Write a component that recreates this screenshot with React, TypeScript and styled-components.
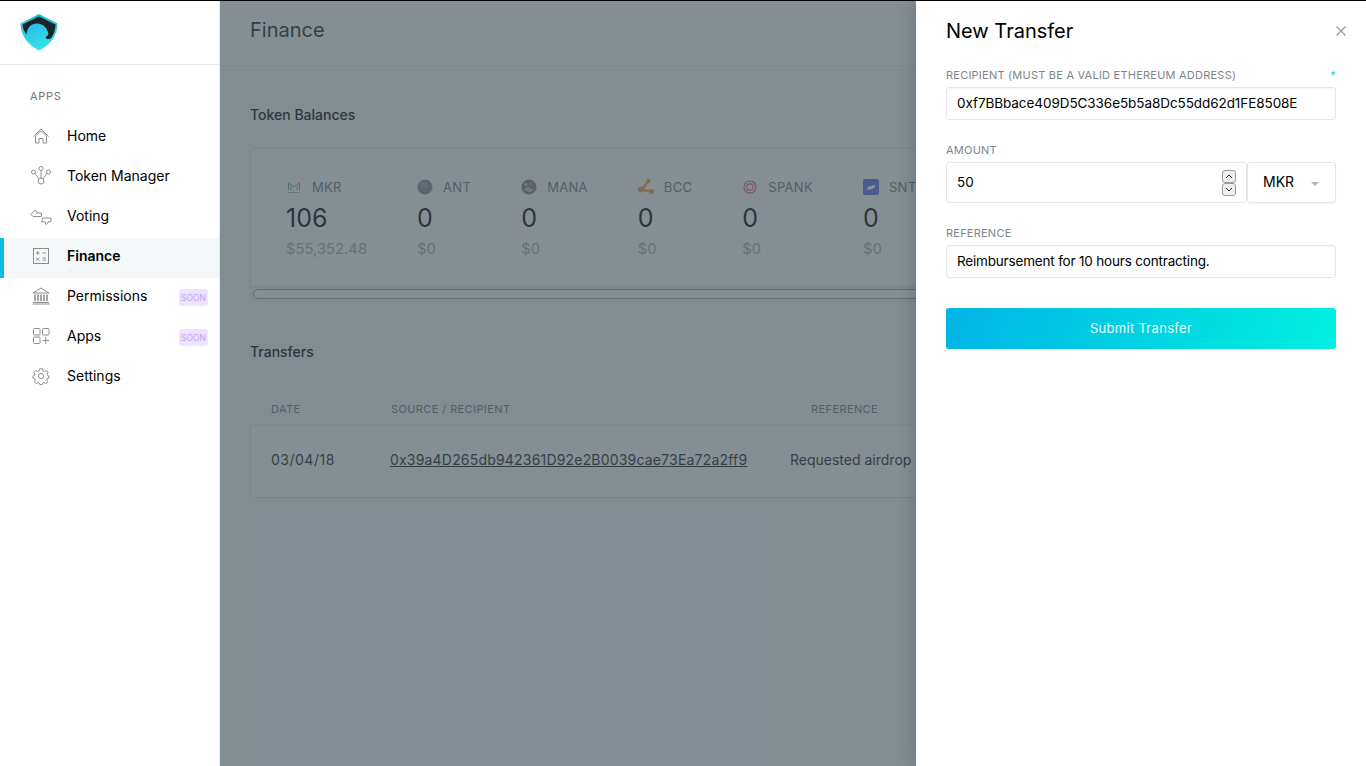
import { ReactNode } from 'react';
import styled, { createGlobalStyle } from 'styled-components';

const FONT = `'Inter', 'Liberation Sans', sans-serif`;

const GlobalStyle = createGlobalStyle`
  html, body {
    margin: 0;
    padding: 0;
    height: 100%;
    overflow: hidden;
    background: #fff;
    font-family: ${FONT};
  }
  * { box-sizing: border-box; }
`;

const Page = styled.div`
  position: relative;
  display: flex;
  width: 1366px;
  height: 766px;
  overflow: hidden;
  border-top: 1px solid #000;
`;

/* sidebar */
const Sidebar = styled.aside`
  flex: 0 0 220px;
  display: flex;
  flex-direction: column;
  background: #fff;
  border-right: 1px solid #e8e8e8;
`;

const LogoBar = styled.div`
  height: 64px;
  display: flex;
  align-items: center;
  padding-left: 20px;
  border-bottom: 1px solid #e8e8e8;
`;

const SideLabel = styled.div`
  margin: 24px 0 15px 30px;
  font-size: 11px;
  line-height: 14px;
  letter-spacing: 0.7px;
  color: #6d777b;
`;

const NavList = styled.nav`
  display: flex;
  flex-direction: column;
`;

const NavItem = styled.div<{ $active?: boolean }>`
  display: flex;
  align-items: center;
  height: 40px;
  padding: 0 11px 5px ${(p) => (p.$active ? 26 : 30)}px;
  border-left: ${(p) => (p.$active ? '4px solid #08bee5' : 'none')};
  background: ${(p) => (p.$active ? '#f4f8f9' : 'transparent')};
  color: #000;
  font-size: 14px;
  font-weight: ${(p) => (p.$active ? 600 : 400)};
`;

const NavIcon = styled.span`
  flex: 0 0 22px;
  height: 22px;
  margin-right: 15px;
  display: flex;
  align-items: center;
  justify-content: center;
`;

const Soon = styled.span`
  margin: 4px 0 0 auto;
  width: 29px;
  height: 17px;
  display: flex;
  align-items: center;
  justify-content: center;
  border-radius: 3px;
  background: #ece3ff;
  color: #bfa3f2;
  font-size: 8.5px;
`;

/* finance page behind the overlay */
const Main = styled.main`
  position: relative;
  flex: 1;
  min-width: 0;
  display: flex;
  flex-direction: column;
  background: #f7fbfd;
`;

const MainHeader = styled.header`
  height: 65px;
  flex: none;
  display: flex;
  align-items: center;
  padding: 0 30px 6px;
  background: #fff;
  border-bottom: 1px solid #e8e8e8;
  font-size: 20px;
  color: #15202a;
`;

const MainBody = styled.div`
  padding: 40px 30px 0;
  display: flex;
  flex-direction: column;
`;

const SectionTitle = styled.h2`
  margin: 0;
  font-size: 14px;
  line-height: 18px;
  font-weight: 500;
  color: #000;
`;

const BalancesCard = styled.div`
  margin-top: 24px;
  height: 154px;
  display: flex;
  flex-direction: column;
  background: #fff;
  border: 1px solid #e6e6e6;
  border-radius: 3px;
`;

const TokenRow = styled.div`
  flex: 1;
  display: flex;
  gap: 50px;
  padding: 29px 0 0 35px;
  overflow: hidden;
`;

const Token = styled.div`
  flex: none;
  display: flex;
  flex-direction: column;
`;

const TokenHead = styled.div`
  display: flex;
  align-items: center;
  height: 18px;
  font-size: 13px;
  letter-spacing: 0.3px;
  color: #6d777b;
`;

const TokenIcon = styled.span`
  flex: 0 0 16px;
  height: 16px;
  margin-right: 10px;
  display: flex;
`;

const TokenAmount = styled.div`
  margin-top: 7px;
  font-size: 25px;
  line-height: 30px;
  color: #000;
`;

const TokenValue = styled.div`
  margin-top: 6px;
  font-size: 14.8px;
  line-height: 20px;
  color: #a5abb0;
`;

const Scrollbar = styled.div`
  flex: none;
  height: 15px;
  padding: 2px;
  background: #f1f3f4;
  border-top: 1px solid #dfe2e4;
`;

const ScrollThumb = styled.div`
  height: 10px;
  width: 1000px;
  background: #fdfdfd;
  border: 1px solid #9aa0a5;
  border-radius: 5px;
`;

const TransfersTitle = styled(SectionTitle)`
  margin-top: 41px;
`;

const TableHead = styled.div`
  margin-top: 41px;
  display: grid;
  grid-template-columns: 141px 399px 1fr;
  font-size: 11px;
  line-height: 14px;
  color: #6d777b;
  letter-spacing: 0.4px;
`;

const HeadCell = styled.div`
  padding-left: 21px;
  &:nth-child(2) { padding-left: 0; }
`;

const TableRow = styled.div`
  margin-top: 9px;
  height: 73px;
  padding-bottom: 4px;
  display: grid;
  grid-template-columns: 139px 400px 1fr;
  align-items: center;
  background: #fff;
  border: 1px solid #e6e6e6;
  border-radius: 3px;
  font-size: 14px;
  color: #15202a;
  white-space: nowrap;
`;

const DateCell = styled.div`
  padding-left: 20px;
  letter-spacing: 0.5px;
`;

const AddressLink = styled.a`
  color: inherit;
  text-decoration: underline;
  letter-spacing: 0.19px;
`;

const Overlay = styled.div`
  position: absolute;
  inset: 0;
  background: rgba(68, 81, 89, 0.65);
`;

/* transfer panel */
const Panel = styled.section`
  position: absolute;
  top: 0;
  right: 0;
  bottom: 0;
  width: 450px;
  padding: 0 30px;
  display: flex;
  flex-direction: column;
  background: #fff;
  box-shadow: -2px 0 18px rgba(0, 0, 0, 0.18);
`;

const PanelHeader = styled.header`
  height: 60px;
  padding-bottom: 1px;
  display: flex;
  align-items: center;
  justify-content: space-between;
`;

const PanelTitle = styled.h1`
  margin: 0;
  font-size: 20px;
  font-weight: 400;
  color: #000;
`;

const CloseButton = styled.button`
  margin-right: -10px;
  padding: 0;
  width: 10px;
  height: 10px;
  border: 0;
  background: none;
  display: flex;
`;

const Field = styled.div`
  display: flex;
  flex-direction: column;
  margin-bottom: 16px;
`;

const LabelRow = styled.label`
  display: flex;
  justify-content: space-between;
  height: 26px;
  padding-top: 7px;
  font-size: 11px;
  line-height: 14px;
  letter-spacing: 0.23px;
  color: #7d858a;
`;

const Required = styled.span`
  color: #08d8e5;
`;

const TextInput = styled.input<{ $spacing: number }>`
  width: 100%;
  height: 33px;
  padding: 0 10px 2px;
  border: 1px solid #e6e6e6;
  border-radius: 3px;
  outline: 0;
  background: #fff;
  box-shadow: inset 0 1px 2px rgba(0, 0, 0, 0.04);
  font: 400 13.5px ${FONT};
  letter-spacing: ${(p) => p.$spacing}px;
  color: #000;
`;

const AmountRow = styled.div`
  display: flex;
  height: 41px;
`;

const AmountBox = styled.div`
  flex: 1;
  display: flex;
  align-items: center;
  padding: 0 10px;
  border: 1px solid #e6e6e6;
  border-radius: 3px;
`;

const AmountInput = styled.input`
  flex: 1;
  min-width: 0;
  padding: 0 0 2px;
  border: 0;
  outline: 0;
  font: 400 13.5px ${FONT};
  color: #000;
`;

const Stepper = styled.div`
  flex: none;
  display: flex;
  flex-direction: column;
`;

const StepButton = styled.span`
  width: 14px;
  height: 13px;
  display: flex;
  align-items: center;
  justify-content: center;
  background: #efefef;
  border: 1px solid #9b9b9b;
  border-radius: 3px;
`;

const SelectBox = styled.div`
  flex: 0 0 89px;
  display: flex;
  align-items: center;
  justify-content: space-between;
  padding: 0 16px 2px 15px;
  border: 1px solid #e6e6e6;
  border-radius: 3px;
  box-shadow: 0 1px 2px rgba(0, 0, 0, 0.05);
  font-size: 14px;
  color: #000;
`;

const Caret = styled.span`
  width: 0;
  height: 0;
  margin-top: 4px;
  border-left: 4px solid transparent;
  border-right: 4px solid transparent;
  border-top: 4px solid #b3b3b3;
`;

const SubmitButton = styled.button`
  margin-top: 14px;
  height: 41px;
  padding: 0 0 2px;
  border: 0;
  border-radius: 3px;
  background: linear-gradient(110deg, #00b4e6, #00f0e0);
  color: #e4fbfb;
  font: 400 13px ${FONT};
  letter-spacing: 0.3px;
`;

/* drawings */
const Svg = ({ children, size = 22 }: { children: ReactNode; size?: number }) => (
  <svg width={size} height={size} viewBox="0 0 22 22" fill="none" stroke="#8e8e8e" strokeWidth="1">
    {children}
  </svg>
);

const Logo = () => (
  <svg width="38" height="37" viewBox="0 0 38 37">
    <defs>
      <linearGradient id="shieldEdge" x1="0" y1="0" x2="0" y2="1">
        <stop offset="0" stopColor="#1fb6d8" />
        <stop offset="1" stopColor="#34e6ea" />
      </linearGradient>
      <linearGradient id="shieldFill" x1="0.2" y1="0" x2="0.7" y2="1">
        <stop offset="0" stopColor="#2bb4ea" />
        <stop offset="1" stopColor="#2fe4e4" />
      </linearGradient>
    </defs>
    <path d="M19 0 L37.5 9.5 C37.5 22 30 31 19 36.5 C8 31 0.5 22 0.5 9.5 Z" fill="url(#shieldEdge)" />
    <path d="M19 2.5 L35.5 10.5 C35 22 28.5 29.5 19 34.5 C9.5 29.5 3 22 2.5 10.5 Z" fill="url(#shieldFill)" />
    <path
      d="M19 2.5 L35.5 10.5 C35.3 15 34 20 31.5 23.5 C29.5 25.5 26.5 25.5 25.5 23.5 C26 21.5 28 22 28.5 20.5 C28 15 23.5 9.5 17 9.5 C11 9.5 7 14 6.5 20.5 C4 17 2.8 14 2.5 10.5 Z"
      fill="#1d2226"
    />
  </svg>
);

const HomeIcon = () => (
  <Svg>
    <path d="M3.5 11.5 L11 4 L18.5 11.5 M5.5 11 L11 5.8 L16.5 11 M5.5 11 V18 H9 V13.5 H13 V18 H16.5 V11" />
  </Svg>
);
const TokenManagerIcon = () => (
  <Svg>
    <circle cx="11" cy="3.5" r="2" />
    <circle cx="3.5" cy="7" r="2" />
    <circle cx="18.5" cy="7" r="2" />
    <circle cx="11" cy="16" r="3" />
    <path d="M11 5.5 V13 M5 8.5 L9 13.8 M17 8.5 L13 13.8" />
  </Svg>
);
const VotingIcon = () => (
  <Svg>
    <path d="M1 9.5 L5 5 L6.5 6.2 L6 8 H11.5 V11.5 L3 11.5 Z" />
    <path d="M21 13 V16.5 L18 17 L16.5 19.5 L15.5 19 L15.5 17 L11.5 16.5 L12.5 13 Z" />
  </Svg>
);
const FinanceIcon = () => (
  <Svg>
    <rect x="3.5" y="3.5" width="15" height="15" />
    <path d="M6 8 H9.5 M7.8 6.2 V9.8 M12.5 8 H16 M6.2 12.5 L9.2 15.5 M9.2 12.5 L6.2 15.5 M12.5 13 H16 M12.5 15 H16" />
  </Svg>
);
const PermissionsIcon = () => (
  <Svg>
    <path d="M3 8 L11 3 L19 8 Z" />
    <path d="M5 9.5 V16 M8 9.5 V16 M11 9.5 V16 M14 9.5 V16 M17 9.5 V16" strokeWidth="1.6" />
    <path d="M3 17.5 H19 M2.5 19 H19.5" />
  </Svg>
);
const AppsIcon = () => (
  <Svg>
    <rect x="3.5" y="3.5" width="6.5" height="6.5" rx="1" />
    <rect x="12.5" y="3.5" width="6.5" height="6.5" rx="1" />
    <rect x="3.5" y="12" width="6.5" height="6.5" rx="1" />
    <path d="M12.5 15.5 H19 M15.7 12.2 V18.8" />
  </Svg>
);
const SettingsIcon = () => (
  <Svg>
    <circle cx="11" cy="11" r="2.6" />
    <path d="M9.6 3.8 H12.4 L12.9 5.9 L14.4 6.5 L16.2 5.4 L18.1 7.3 L17 9.1 L17.6 10.6 L19 11 V13 L17.3 13.5 L16.7 15 L17.7 16.8 L15.8 18.6 L14 17.6 L12.6 18.1 L12.2 19.5 H9.8 L9.4 18.1 L8 17.6 L6.2 18.6 L4.3 16.8 L5.3 15 L4.7 13.5 L3 13 V11 L4.4 10.6 L5 9.1 L3.9 7.3 L5.8 5.4 L7.6 6.5 L9.1 5.9 Z" />
  </Svg>
);

const MkrIcon = () => (
  <svg width="16" height="16" viewBox="0 0 16 16" fill="none" stroke="#5fa8a3" strokeWidth="1">
    <path d="M2.5 11 V4 L8 8 L13.5 4 V11 M5 11 V7.5 M11 11 V7.5" />
    <path d="M2.5 13.5 H13.5" strokeDasharray="1.5 0.6" />
  </svg>
);
const AntIcon = () => (
  <svg width="16" height="16" viewBox="0 0 16 16">
    <circle cx="8" cy="8" r="7.5" fill="#7d8a98" />
    <circle cx="7" cy="6.5" r="4" fill="#a4b0bc" opacity="0.5" />
  </svg>
);
const ManaIcon = () => (
  <svg width="16" height="16" viewBox="0 0 16 16">
    <circle cx="8" cy="8" r="7.5" fill="#7c7f82" />
    <circle cx="10" cy="5" r="2" fill="#e2853c" />
    <circle cx="5" cy="5.5" r="1.5" fill="#d8d8d8" />
    <path d="M3 10 L7 8 L13 11 L8 13.5 Z" fill="#c4c6c8" />
  </svg>
);
const BccIcon = () => (
  <svg width="16" height="16" viewBox="0 0 16 16" fill="#f79f3f">
    <circle cx="3" cy="10.5" r="3" />
    <circle cx="13.5" cy="12.5" r="2.5" />
    <circle cx="10.5" cy="2" r="2" />
    <path d="M3 9.5 L9.5 1.5 L11 2.5 L6 10 L13.5 11.5 L13 13.5 L3 12 Z" />
  </svg>
);
const SpankIcon = () => (
  <svg width="16" height="16" viewBox="0 0 16 16" fill="none" stroke="#f1528b" strokeWidth="1.2">
    <circle cx="8" cy="8" r="6" />
    <circle cx="8" cy="8" r="3.2" />
  </svg>
);
const SntIcon = () => (
  <svg width="16" height="16" viewBox="0 0 16 16">
    <rect width="16" height="16" rx="2" fill="#5b6dee" />
    <path d="M4 10 C4 7 8 7 11 6 C12.5 5.5 12.5 7 12 8 C11 10 4 12 4 10 Z" fill="#fff" />
  </svg>
);

const NAV = [
  { label: 'Home', icon: <HomeIcon /> },
  { label: 'Token Manager', icon: <TokenManagerIcon /> },
  { label: 'Voting', icon: <VotingIcon /> },
  { label: 'Finance', icon: <FinanceIcon />, active: true },
  { label: 'Permissions', icon: <PermissionsIcon />, soon: true },
  { label: 'Apps', icon: <AppsIcon />, soon: true },
  { label: 'Settings', icon: <SettingsIcon /> },
];

const TOKENS = [
  { symbol: 'MKR', amount: '106', value: '$55,352.48', icon: <MkrIcon /> },
  { symbol: 'ANT', amount: '0', value: '$0', icon: <AntIcon /> },
  { symbol: 'MANA', amount: '0', value: '$0', icon: <ManaIcon /> },
  { symbol: 'BCC', amount: '0', value: '$0', icon: <BccIcon /> },
  { symbol: 'SPANK', amount: '0', value: '$0', icon: <SpankIcon /> },
  { symbol: 'SNT', amount: '0', value: '$0', icon: <SntIcon /> },
];

export default function App() {
  return (
    <Page>
      <GlobalStyle />
      <Sidebar>
        <LogoBar>
          <Logo />
        </LogoBar>
        <SideLabel>APPS</SideLabel>
        <NavList>
          {NAV.map((item) => (
            <NavItem key={item.label} $active={item.active}>
              <NavIcon>{item.icon}</NavIcon>
              {item.label}
              {item.soon && <Soon>SOON</Soon>}
            </NavItem>
          ))}
        </NavList>
      </Sidebar>

      <Main>
        <MainHeader>Finance</MainHeader>
        <MainBody>
          <SectionTitle>Token Balances</SectionTitle>
          <BalancesCard>
            <TokenRow>
              {TOKENS.map((t) => (
                <Token key={t.symbol}>
                  <TokenHead>
                    <TokenIcon>{t.icon}</TokenIcon>
                    {t.symbol}
                  </TokenHead>
                  <TokenAmount>{t.amount}</TokenAmount>
                  <TokenValue>{t.value}</TokenValue>
                </Token>
              ))}
            </TokenRow>
            <Scrollbar>
              <ScrollThumb />
            </Scrollbar>
          </BalancesCard>
          <TransfersTitle>Transfers</TransfersTitle>
          <TableHead>
            <HeadCell>DATE</HeadCell>
            <HeadCell>SOURCE / RECIPIENT</HeadCell>
            <HeadCell>REFERENCE</HeadCell>
          </TableHead>
          <TableRow>
            <DateCell>03/04/18</DateCell>
            <AddressLink>0x39a4D265db942361D92e2B0039cae73Ea72a2ff9</AddressLink>
            <div>Requested airdrop</div>
          </TableRow>
        </MainBody>
        <Overlay />
      </Main>

      <Panel>
        <PanelHeader>
          <PanelTitle>New Transfer</PanelTitle>
          <CloseButton aria-label="Close">
            <svg width="10" height="10" viewBox="0 0 10 10" stroke="#a0a0a0" strokeWidth="1.5">
              <path d="M0.5 0.5 L9.5 9.5 M9.5 0.5 L0.5 9.5" />
            </svg>
          </CloseButton>
        </PanelHeader>
        <Field>
          <LabelRow>
            <span>RECIPIENT (MUST BE A VALID ETHEREUM ADDRESS)</span>
            <Required>*</Required>
          </LabelRow>
          <TextInput readOnly $spacing={-0.07} value="0xf7BBbace409D5C336e5b5a8Dc55dd62d1FE8508E" />
        </Field>
        <Field>
          <LabelRow>AMOUNT</LabelRow>
          <AmountRow>
            <AmountBox>
              <AmountInput readOnly value="50" />
              <Stepper>
                <StepButton>
                  <svg width="8" height="5" viewBox="0 0 8 5" fill="none" stroke="#222" strokeWidth="1">
                    <path d="M1 4 L4 1 L7 4" />
                  </svg>
                </StepButton>
                <StepButton>
                  <svg width="8" height="5" viewBox="0 0 8 5" fill="none" stroke="#222" strokeWidth="1">
                    <path d="M1 1 L4 4 L7 1" />
                  </svg>
                </StepButton>
              </Stepper>
            </AmountBox>
            <SelectBox>
              MKR
              <Caret />
            </SelectBox>
          </AmountRow>
        </Field>
        <Field>
          <LabelRow>REFERENCE</LabelRow>
          <TextInput readOnly $spacing={-0.18} value="Reimbursement for 10 hours contracting." />
        </Field>
        <SubmitButton>Submit Transfer</SubmitButton>
      </Panel>
    </Page>
  );
}
